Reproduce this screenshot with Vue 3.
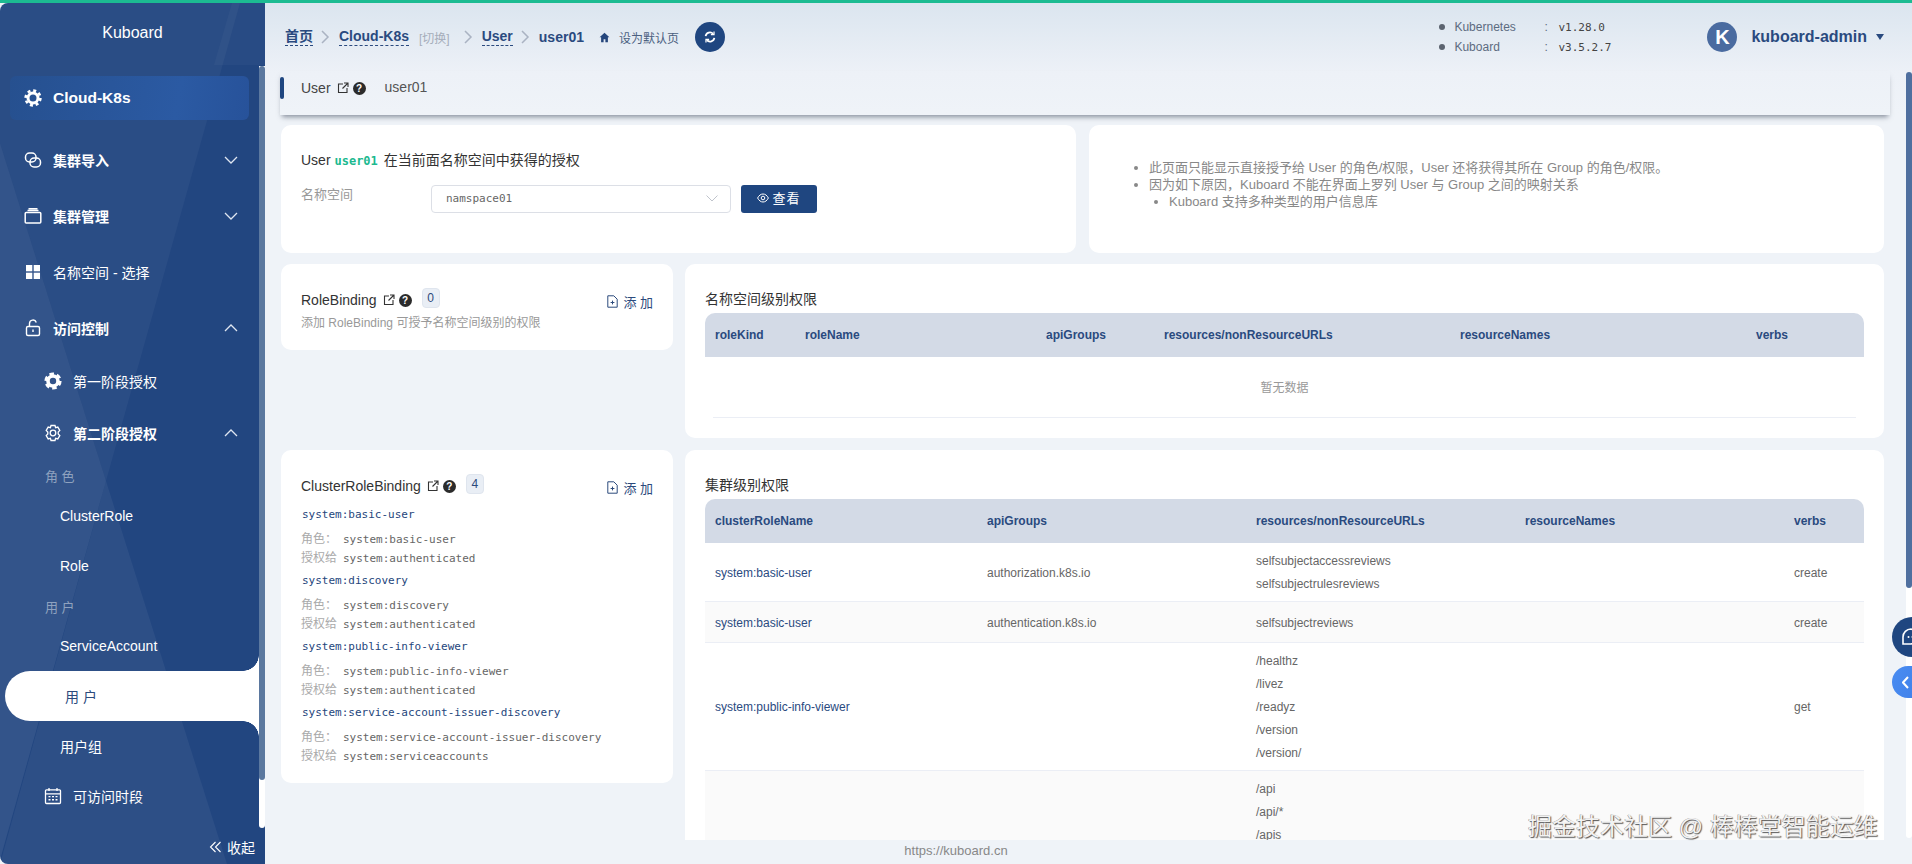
<script setup>
const navItems = [
  { label: '集群导入', icon: 'link', cls: 'lvl1 bold', arrow: 'down' },
  { label: '集群管理', icon: 'box', cls: 'lvl1 bold', arrow: 'down' },
  { label: '名称空间 - 选择', icon: 'grid', cls: 'lvl1' },
  { label: '访问控制', icon: 'lock', cls: 'lvl1 bold', arrow: 'up' },
  { label: '第一阶段授权', icon: 'gear', cls: 'sub tight' },
  { label: '第二阶段授权', icon: 'gearline', cls: 'sub bold', arrow: 'up' },
  { label: '角 色', cls: 'group' },
  { label: 'ClusterRole', cls: 'leaf' },
  { label: 'Role', cls: 'leaf' },
  { label: '用 户', cls: 'group short' },
  { label: 'ServiceAccount', cls: 'leaf' },
  { label: '用 户', cls: 'leaf current' },
  { label: '用户组', cls: 'leaf' },
  { label: '可访问时段', icon: 'cal', cls: 'sub plain' },
]

const bindings = [
  { name: 'system:basic-user', role: 'system:basic-user', to: 'system:authenticated' },
  { name: 'system:discovery', role: 'system:discovery', to: 'system:authenticated' },
  { name: 'system:public-info-viewer', role: 'system:public-info-viewer', to: 'system:authenticated' },
  { name: 'system:service-account-issuer-discovery', role: 'system:service-account-issuer-discovery', to: 'system:serviceaccounts' },
]

const nsColumns = [
  { title: 'roleKind', width: 90 },
  { title: 'roleName', width: 241 },
  { title: 'apiGroups', width: 118 },
  { title: 'resources/nonResourceURLs', width: 296 },
  { title: 'resourceNames', width: 296 },
  { title: 'verbs', width: 118 },
]

const clusterColumns = [
  { title: 'clusterRoleName', width: 272 },
  { title: 'apiGroups', width: 269 },
  { title: 'resources/nonResourceURLs', width: 269 },
  { title: 'resourceNames', width: 269 },
  { title: 'verbs', width: 80 },
]

const clusterRows = [
  { name: 'system:basic-user', group: 'authorization.k8s.io', res: ['selfsubjectaccessreviews', 'selfsubjectrulesreviews'], verb: 'create' },
  { name: 'system:basic-user', group: 'authentication.k8s.io', res: ['selfsubjectreviews'], verb: 'create' },
  { name: 'system:public-info-viewer', group: '', res: ['/healthz', '/livez', '/readyz', '/version', '/version/'], verb: 'get' },
  { name: '', group: '', res: ['/api', '/api/*', '/apis'], verb: '' },
]
</script>

<template>
  <div class="page">
    <div class="topline"></div>
    <div class="shell">
      <aside class="sidebar">
        <svg class="side-bg" width="265" height="861" viewBox="0 0 265 861">
          <polygon points="0,0 240,0 106,478 0,140" fill="#fff" opacity="0.04" />
          <polygon points="0,140 106,478 0,857" fill="#fff" opacity="0.08" />
          <polygon points="106,478 227,861 0,861" fill="#fff" opacity="0.05" />
          <polygon points="232,0 265,0 265,62 214,62" fill="#fff" opacity="0.03" />
        </svg>
        <div class="side-scroll"><div class="side-thumb"></div></div>
        <div class="brand">Kuboard</div>
        <div class="cluster">
          <svg class="nav-icon" width="18" height="18" viewBox="0 0 18 18">
            <circle cx="9" cy="9" r="5" fill="none" stroke="#fff" stroke-width="3" />
            <circle cx="9" cy="9" r="7.4" fill="none" stroke="#fff" stroke-width="2.6" stroke-dasharray="3 2.81" />
          </svg>
          <span>Cloud-K8s</span>
        </div>
        <nav class="nav">
          <div v-for="(item, i) in navItems" :key="i" class="nav-item" :class="item.cls">
            <svg v-if="item.icon === 'link'" class="nav-icon" width="18" height="18" viewBox="0 0 18 18" fill="none" stroke="#fff" stroke-width="1.5">
              <rect x="1.5" y="2" width="10.5" height="9" rx="4" />
              <rect x="6" y="7" width="10.5" height="9" rx="4" />
            </svg>
            <svg v-else-if="item.icon === 'box'" class="nav-icon" width="18" height="18" viewBox="0 0 18 18" fill="none" stroke="#fff" stroke-width="1.5">
              <rect x="1.2" y="5.5" width="15.6" height="10.5" rx="1" />
              <path d="M3.5 3.6h11M4.5 1.8h9" />
            </svg>
            <svg v-else-if="item.icon === 'grid'" class="nav-icon" width="18" height="18" viewBox="0 0 18 18" fill="#fff">
              <rect x="2" y="2" width="6.3" height="6.3" />
              <rect x="9.7" y="2" width="6.3" height="6.3" />
              <rect x="2" y="9.7" width="6.3" height="6.3" />
              <rect x="9.7" y="9.7" width="6.3" height="6.3" />
            </svg>
            <svg v-else-if="item.icon === 'lock'" class="nav-icon" width="18" height="18" viewBox="0 0 18 18" fill="none" stroke="#fff" stroke-width="1.4">
              <rect x="2.5" y="7.5" width="13" height="9" rx="1.5" />
              <path d="M5.5 7.5V4.5a3.5 3.5 0 0 1 6.8-1.1M9 10.5v2.6" />
            </svg>
            <svg v-else-if="item.icon === 'gear'" class="nav-icon" width="18" height="18" viewBox="0 0 18 18">
              <circle cx="9" cy="9" r="5" fill="none" stroke="#fff" stroke-width="3.6" />
              <circle cx="9" cy="9" r="7.2" fill="none" stroke="#fff" stroke-width="2.8" stroke-dasharray="4.5 3.04" />
            </svg>
            <svg v-else-if="item.icon === 'gearline'" class="nav-icon" width="18" height="18" viewBox="0 0 18 18" fill="none" stroke="#fff" stroke-width="1.3">
              <path d="M7 1.5h4l.6 2.2 2.2-.6 2 3.4-1.6 1.6v1.8l1.6 1.6-2 3.4-2.2-.6-.6 2.2H7l-.6-2.2-2.2.6-2-3.4 1.6-1.6V8.1L2.2 6.5l2-3.4 2.2.6z" />
              <circle cx="9" cy="9" r="2.8" />
            </svg>
            <svg v-else-if="item.icon === 'cal'" class="nav-icon" width="18" height="18" viewBox="0 0 18 18" fill="none" stroke="#fff" stroke-width="1.3">
              <rect x="1.5" y="2.8" width="15" height="13.7" rx="1" />
              <path d="M1.5 6.8h15M5 1v3M13 1v3" />
              <path d="M4.5 9.6h2M8 9.6h2M11.5 9.6h2M4.5 12.8h2M8 12.8h2M11.5 12.8h2" stroke-width="1.4" />
            </svg>
            <span class="nav-text">{{ item.label }}</span>
            <svg v-if="item.arrow" class="nav-arrow" width="14" height="8" viewBox="0 0 14 8" fill="none" stroke="#dfe6f1" stroke-width="1.3">
              <path v-if="item.arrow === 'down'" d="M1 1l6 6 6-6" />
              <path v-else d="M1 7l6-6 6 6" />
            </svg>
          </div>
        </nav>
        <div class="collapse">
          <svg width="13" height="12" viewBox="0 0 13 12" fill="none" stroke="#fff" stroke-width="1.1">
            <path d="M6.5 1L1.5 6l5 5M11.5 1l-5 5 5 5" />
          </svg>
          <span>收起</span>
        </div>
      </aside>

      <main class="main">
        <header class="topbar">
          <div class="crumbs">
            <a class="crumb">首页</a>
            <svg class="sep" width="9" height="14" viewBox="0 0 9 14" fill="none" stroke="#aab3c2" stroke-width="1.5"><path d="M1 1l6 6-6 6" /></svg>
            <a class="crumb">Cloud-K8s</a>
            <span class="switch">[切换]</span>
            <svg class="sep wide" width="9" height="14" viewBox="0 0 9 14" fill="none" stroke="#aab3c2" stroke-width="1.5"><path d="M1 1l6 6-6 6" /></svg>
            <a class="crumb">User</a>
            <svg class="sep" width="9" height="14" viewBox="0 0 9 14" fill="none" stroke="#aab3c2" stroke-width="1.5"><path d="M1 1l6 6-6 6" /></svg>
            <span class="crumb-end">user01</span>
            <svg class="home" width="11" height="11" viewBox="0 0 11 11" fill="#25467c"><path d="M5.5.8L.6 5.3h1.5v5h2.5V7.2h1.8v3.1h2.5v-5h1.5z" /></svg>
            <span class="set-default">设为默认页</span>
            <span class="refresh">
              <svg width="14" height="14" viewBox="0 0 16 16" fill="none" stroke="#fff" stroke-width="2">
                <path d="M3 7a5 5 0 0 1 8.6-2.6M13 9a5 5 0 0 1-8.6 2.6" />
                <path d="M12.6 1.6v3.6H9M3.4 14.4v-3.6H7" stroke-width="1.4" />
              </svg>
            </span>
          </div>
          <div class="right-info">
            <div class="versions">
              <div class="ver"><i></i><span class="ver-name">Kubernetes</span><span class="ver-colon">:</span><code>v1.28.0</code></div>
              <div class="ver"><i></i><span class="ver-name">Kuboard</span><span class="ver-colon">:</span><code>v3.5.2.7</code></div>
            </div>
            <span class="avatar">K</span>
            <span class="username">kuboard-admin</span>
            <span class="caret"></span>
          </div>
        </header>

        <div class="subbar">
          <span class="mark"></span>
          <span class="sub-kind">User</span>
          <svg class="ext" width="12" height="12" viewBox="0 0 12 12" fill="none" stroke="#333" stroke-width="1.1"><path d="M6 2H1.5v8.5H10V6M7 1h4v4M11 1L5.5 6.5" /></svg>
          <span class="help">?</span>
          <span class="sub-name">user01</span>
        </div>

        <div class="content">
          <div class="row-top">
            <section class="card query">
              <div class="query-title">User <code>user01</code> 在当前面名称空间中获得的授权</div>
              <div class="form-row">
                <label>名称空间</label>
                <div class="select">
                  <code>namspace01</code>
                  <svg width="12" height="7" viewBox="0 0 12 7" fill="none" stroke="#c0c4cc" stroke-width="1"><path d="M.5.5L6 6 11.5.5" /></svg>
                </div>
                <button class="view-btn">
                  <svg width="12" height="10" viewBox="0 0 12 10" fill="none" stroke="#fff" stroke-width="1"><path d="M.6 5C2 2.4 3.8 1 6 1s4 1.4 5.4 4C10 7.6 8.2 9 6 9S2 7.6.6 5z" /><circle cx="6" cy="5" r="1.8" /></svg>
                  查看
                </button>
              </div>
            </section>
            <section class="card notes">
              <ul>
                <li>此页面只能显示直接授予给 User 的角色/权限，User 还将获得其所在 Group 的角色/权限。</li>
                <li>因为如下原因，Kuboard 不能在界面上罗列 User 与 Group 之间的映射关系
                  <ul><li>Kuboard 支持多种类型的用户信息库</li></ul>
                </li>
              </ul>
            </section>
          </div>

          <div class="row-split first">
            <section class="card side-card short">
              <div class="side-head">
                <span class="side-title">RoleBinding</span>
                <svg class="ext" width="12" height="12" viewBox="0 0 12 12" fill="none" stroke="#333" stroke-width="1.1"><path d="M6 2H1.5v8.5H10V6M7 1h4v4M11 1L5.5 6.5" /></svg>
                <span class="help">?</span>
                <span class="count">0</span>
                <a class="add">
                  <svg width="11" height="13" viewBox="0 0 11 13" fill="none" stroke="#2c4a7c" stroke-width="1"><path d="M.8.8h6l3.4 3.4v8H.8zM3.6 7.5h3.8M5.5 5.6v3.8" /></svg>
                  添 加
                </a>
              </div>
              <p class="side-desc">添加 RoleBinding 可授予名称空间级别的权限</p>
            </section>
            <section class="card table-card ns">
              <h4>名称空间级别权限</h4>
              <table>
                <colgroup><col v-for="c in nsColumns" :key="c.title" :style="{ width: c.width + 'px' }" /></colgroup>
                <thead><tr><th v-for="c in nsColumns" :key="c.title">{{ c.title }}</th></tr></thead>
              </table>
              <div class="empty">暂无数据</div>
            </section>
          </div>

          <div class="row-split">
            <section class="card side-card">
              <div class="side-head">
                <span class="side-title">ClusterRoleBinding</span>
                <svg class="ext" width="12" height="12" viewBox="0 0 12 12" fill="none" stroke="#333" stroke-width="1.1"><path d="M6 2H1.5v8.5H10V6M7 1h4v4M11 1L5.5 6.5" /></svg>
                <span class="help">?</span>
                <span class="count">4</span>
                <a class="add">
                  <svg width="11" height="13" viewBox="0 0 11 13" fill="none" stroke="#2c4a7c" stroke-width="1"><path d="M.8.8h6l3.4 3.4v8H.8zM3.6 7.5h3.8M5.5 5.6v3.8" /></svg>
                  添 加
                </a>
              </div>
              <div v-for="b in bindings" :key="b.name" class="binding">
                <div class="binding-name">{{ b.name }}</div>
                <div class="binding-line"><span>角色：</span><code>{{ b.role }}</code></div>
                <div class="binding-line"><span>授权给</span><code>{{ b.to }}</code></div>
              </div>
            </section>
            <section class="card table-card">
              <h4>集群级别权限</h4>
              <table>
                <colgroup><col v-for="c in clusterColumns" :key="c.title" :style="{ width: c.width + 'px' }" /></colgroup>
                <thead><tr><th v-for="c in clusterColumns" :key="c.title">{{ c.title }}</th></tr></thead>
                <tbody>
                  <tr v-for="(r, i) in clusterRows" :key="i">
                    <td class="name-cell">{{ r.name }}</td>
                    <td>{{ r.group }}</td>
                    <td><div v-for="s in r.res" :key="s">{{ s }}</div></td>
                    <td></td>
                    <td>{{ r.verb }}</td>
                  </tr>
                </tbody>
              </table>
            </section>
          </div>
        </div>

        <footer class="foot">https://kuboard.cn</footer>
      </main>
    </div>

    <div class="main-scroll"><div class="main-thumb"></div></div>
    <div class="chat">
      <svg width="22" height="22" viewBox="0 0 22 22" fill="none" stroke="#fff" stroke-width="1.6">
        <path d="M11 3a8 8 0 0 0-8 8v7h8a8 8 0 0 0 0-15z" />
        <circle cx="8.5" cy="11" r="1" fill="#fff" stroke="none" />
        <circle cx="12.5" cy="11" r="1" fill="#fff" stroke="none" />
      </svg>
    </div>
    <div class="expand">
      <svg width="7" height="13" viewBox="0 0 7 13" fill="none" stroke="#fff" stroke-width="2"><path d="M6 1L1 6.5 6 12" /></svg>
    </div>
    <div class="watermark">掘金技术社区 @ 棒棒堂智能运维</div>
  </div>
</template>

<style>
html, body {
  margin: 0;
  background: #eff3f8;
  overflow: hidden;
}
</style>

<style scoped>
.page {
  position: relative;
  width: 1912px;
  height: 864px;
  overflow: hidden;
  background: #eff3f8;
  font-family: "Liberation Sans", "Noto Sans CJK SC", sans-serif;
  font-size: 12px;
  color: #666;
}

code {
  font-family: "DejaVu Sans Mono", "Noto Sans CJK SC", monospace;
  font-size: 11px;
}

.topline {
  height: 3px;
  background: #1cbb92;
}

.shell {
  display: flex;
  height: 861px;
}

/* sidebar */
.sidebar {
  position: relative;
  flex: 0 0 265px;
  background: #224680;
  border-radius: 8px 0 0 8px;
  overflow: hidden;
  color: #fff;
}

.side-bg {
  position: absolute;
  left: 0;
  top: 0;
}

.side-scroll {
  position: absolute;
  left: 259px;
  top: 63px;
  width: 6px;
  height: 762px;
  background: #fff;
  border-radius: 0 0 3px 3px;
}

.side-thumb {
  height: 714px;
  background: #5b789f;
  border-radius: 3px;
}

.brand {
  position: relative;
  height: 58px;
  line-height: 60px;
  text-align: center;
  font-size: 16px;
}

.cluster {
  position: relative;
  display: flex;
  align-items: center;
  gap: 11px;
  height: 44px;
  margin: 15px 16px 0 10px;
  padding-left: 14px;
  border-radius: 6px;
  background: linear-gradient(100deg, #26508f, #2b5aa3 70%, #27529a);
  font-size: 15.5px;
  font-weight: bold;
}

.nav {
  position: relative;
  width: 259px;
  margin-top: 12px;
}

.nav-item {
  position: relative;
  display: flex;
  align-items: center;
  font-size: 14px;
}

.nav-item.bold .nav-text {
  font-weight: bold;
}

.nav-item.lvl1 {
  height: 56px;
  padding-left: 24px;
}

.nav-item.lvl1 .nav-text {
  margin-left: 11px;
}

.nav-item.sub {
  height: 54px;
  padding-left: 44px;
}

.nav-item.sub.tight {
  height: 50px;
}

.nav-item.sub .nav-text {
  margin-left: 11px;
}

.nav-item.plain {
  height: 50px;
}

.nav-item.group {
  height: 31px;
  padding-left: 45px;
  color: #8fa2bf;
  font-size: 13px;
}

.nav-item.group.short {
  height: 30px;
}

.nav-item.leaf {
  height: 50px;
  padding-left: 60px;
}

.nav-item.current {
  margin-left: 5px;
  padding-left: 60px;
  background: #fff;
  color: #2c4a7c;
  border-radius: 25px 0 0 25px;
}

.nav-item.current::before,
.nav-item.current::after {
  content: "";
  position: absolute;
  right: 0;
  width: 16px;
  height: 16px;
}

.nav-item.current::before {
  top: -16px;
  background: radial-gradient(circle at 0 0, transparent 15.5px, #fff 16px);
}

.nav-item.current::after {
  bottom: -16px;
  background: radial-gradient(circle at 0 100%, transparent 15.5px, #fff 16px);
}

.nav-arrow {
  position: absolute;
  left: 224px;
  top: 50%;
  margin-top: -4px;
}

.nav-icon {
  flex: none;
}

.collapse {
  position: absolute;
  right: 10px;
  bottom: 7px;
  display: flex;
  align-items: center;
  gap: 5px;
  font-size: 14px;
}

/* header */
.main {
  flex: 1;
  min-width: 0;
  display: flex;
  flex-direction: column;
  background: linear-gradient(#dbe5ef 0, #edf1f7 70px, #eff3f8 110px);
}

.topbar {
  display: flex;
  justify-content: space-between;
  align-items: center;
  height: 68px;
  padding-left: 20px;
  flex: none;
}

.crumbs {
  display: flex;
  align-items: center;
}

.crumb {
  font-size: 14px;
  font-weight: bold;
  color: #2a4a7f;
  border-bottom: 1px dashed #2a4a7f;
  line-height: 17px;
}

.crumb-end {
  font-size: 14px;
  font-weight: bold;
  color: #2a4a7f;
}

.sep {
  margin: 0 9px 0 8px;
}

.sep.wide {
  margin-left: 14px;
}

.switch {
  margin-left: 10px;
  color: #a5adba;
  font-size: 12px;
}

.home {
  margin-left: 15px;
}

.set-default {
  margin-left: 9px;
  color: #4b5f80;
  font-size: 12px;
}

.refresh {
  display: flex;
  align-items: center;
  justify-content: center;
  width: 30px;
  height: 30px;
  margin-left: 16px;
  border-radius: 50%;
  background: #1f4680;
}

.right-info {
  display: flex;
  align-items: center;
  padding-right: 28px;
}

.versions {
  margin-right: 90px;
  width: 178px;
}

.ver {
  display: flex;
  align-items: center;
  height: 20px;
  color: #5c6b80;
  font-size: 12px;
}

.ver i {
  width: 6px;
  height: 6px;
  margin-right: 9px;
  border-radius: 50%;
  background: #5c6470;
}

.ver-name {
  width: 90px;
}

.ver-colon {
  width: 14px;
}

.ver code {
  color: #444;
  font-size: 11px;
}

.avatar {
  width: 30px;
  height: 30px;
  line-height: 30px;
  border-radius: 50%;
  background: #4a6ba0;
  color: #fff;
  text-align: center;
  font-size: 20px;
  font-weight: bold;
}

.username {
  margin-left: 14px;
  color: #2a4a7f;
  font-size: 16px;
  font-weight: bold;
}

.caret {
  margin-left: 9px;
  border: 4px solid transparent;
  border-top: 6px solid #2a4a7f;
  border-bottom: 0;
}

.subbar {
  position: relative;
  z-index: 1;
  flex: none;
  display: flex;
  align-items: center;
  height: 44px;
  margin: 0 22px 0 15px;
  padding-bottom: 10px;
  box-sizing: border-box;
  box-shadow: 0 4px 5px -2px rgba(50, 60, 80, 0.55);
}

.mark {
  width: 4px;
  height: 22px;
  border-radius: 2px;
  background: #1f4680;
}

.sub-kind {
  margin-left: 17px;
  color: #444;
  font-size: 14px;
}

.sub-name {
  margin-left: 19px;
  margin-top: -2px;
  color: #555;
  font-size: 14px;
}

.ext {
  margin-left: 6px;
  flex: none;
}

.help {
  width: 13px;
  height: 13px;
  margin-left: 4px;
  border-radius: 50%;
  background: #2b2b2b;
  color: #fff;
  font-size: 10px;
  font-weight: bold;
  line-height: 13px;
  text-align: center;
  flex: none;
}

/* content */
.content {
  flex: 1;
  min-height: 0;
  overflow: hidden;
  padding: 10px 28px 0 16px;
}

.card {
  background: #fff;
  border-radius: 10px;
  box-sizing: border-box;
}

.row-top {
  display: grid;
  grid-template-columns: 1fr 1fr;
  gap: 13px;
}

.query,
.notes {
  height: 128px;
}

.query {
  padding: 26px 20px 0;
  font-size: 14px;
  color: #333;
}

.query-title {
  line-height: 18px;
}

.query-title code {
  margin-right: 2px;
  color: #1cb98f;
  font-size: 12px;
  font-weight: bold;
}

.form-row {
  display: flex;
  align-items: flex-start;
  margin-top: 15px;
}

.form-row label {
  width: 130px;
  line-height: 20px;
  color: #999;
  font-size: 13px;
}

.select {
  display: flex;
  align-items: center;
  justify-content: space-between;
  box-sizing: border-box;
  width: 300px;
  height: 28px;
  padding: 0 12px 2px 14px;
  border: 1px solid #dcdfe6;
  border-radius: 4px;
  color: #666;
}

.view-btn {
  display: flex;
  align-items: center;
  justify-content: center;
  gap: 3px;
  width: 76px;
  height: 28px;
  margin-left: 10px;
  padding: 0 0 3px;
  border: 0;
  border-radius: 3px;
  background: #1f4680;
  color: #fff;
  font-family: inherit;
  font-size: 13px;
  letter-spacing: 1px;
}

.notes {
  padding-top: 34px;
  color: #888;
  font-size: 13px;
  line-height: 17px;
}

.notes ul {
  margin: 0;
  padding-left: 60px;
  list-style: disc;
}

.notes ul ul {
  padding-left: 20px;
  list-style: disc;
}

.row-split {
  display: grid;
  grid-template-columns: 392px 1fr;
  gap: 12px;
  align-items: start;
  margin-top: 12px;
}

.row-split.first {
  margin-top: 11px;
}

.side-card {
  padding: 26px 20px 0;
  height: 333px;
}

.side-card.short {
  height: 86px;
}

.side-head {
  position: relative;
  display: flex;
  align-items: center;
  height: 20px;
}

.side-title {
  color: #333;
  font-size: 14px;
}

.count {
  width: 18px;
  height: 20px;
  margin: -4px 0 0 10px;
  border: 1px solid #dfe5ee;
  border-radius: 4px;
  box-sizing: border-box;
  background: #e9eef5;
  color: #2c4a7c;
  line-height: 18px;
  text-align: center;
}

.add {
  position: absolute;
  right: 0;
  top: 2px;
  display: flex;
  align-items: center;
  gap: 5px;
  color: #2c4a7c;
  font-size: 13px;
}

.side-desc {
  margin: 5px 0 0;
  color: #999;
  font-size: 12px;
  line-height: 16px;
}

.binding {
  padding-left: 1px;
  height: 66px;
}

.side-head + .binding {
  margin-top: 8px;
}

.binding-name {
  height: 26px;
  line-height: 22px;
  font-family: "DejaVu Sans Mono", monospace;
  font-size: 11px;
  color: #25467c;
}

.binding-line {
  display: flex;
  margin-left: -1px;
  height: 19px;
  line-height: 19px;
}

.binding-line span {
  width: 42px;
  color: #aaa;
}

.binding-line code {
  color: #666;
}

.table-card {
  height: 400px;
  padding: 26px 20px 0;
}

.table-card.ns {
  height: 174px;
}

h4 {
  margin: 0 0 5px;
  color: #333;
  font-size: 14px;
  font-weight: normal;
  line-height: 18px;
}

table {
  width: 100%;
  table-layout: fixed;
  border-collapse: separate;
  border-spacing: 0;
}

th {
  height: 44px;
  padding: 0 10px;
  background: #d3dae6;
  color: #2a4a7f;
  font-size: 12px;
  text-align: left;
}

th:first-child {
  border-radius: 10px 0 0 0;
}

th:last-child {
  border-radius: 0 10px 0 0;
}

td {
  padding: 7px 10px 5px;
  border-bottom: 1px solid #ebeef5;
  line-height: 23px;
  color: #666;
}

tbody tr:nth-child(2) td {
  padding-top: 9.5px;
  padding-bottom: 7.5px;
}

tbody tr:nth-child(even) td {
  background: #fafafa;
}

.name-cell {
  color: #2a4a7f;
}

.empty {
  height: 60px;
  margin: 0 8px;
  border-bottom: 1px solid #ebeef5;
  color: #999;
  line-height: 62px;
  text-align: center;
}

.foot {
  flex: none;
  height: 24px;
  padding-right: 265px;
  color: #888;
  font-size: 13px;
  line-height: 22px;
  text-align: center;
  background: #eff3f8;
}

/* overlays */
.main-scroll {
  position: absolute;
  right: 0;
  top: 72px;
  width: 6px;
  height: 766px;
  background: #fff;
  border-radius: 3px;
}

.main-thumb {
  height: 516px;
  background: #4f6f9f;
  border-radius: 3px;
}

.chat {
  position: absolute;
  left: 1892px;
  top: 617px;
  display: flex;
  align-items: center;
  width: 40px;
  height: 40px;
  padding-left: 8px;
  box-sizing: border-box;
  border-radius: 50%;
  background: #1f4680;
}

.expand {
  position: absolute;
  left: 1892px;
  top: 666px;
  display: flex;
  align-items: center;
  width: 32px;
  height: 32px;
  padding-left: 10px;
  box-sizing: border-box;
  border-radius: 16px 0 0 16px;
  background: linear-gradient(120deg, #4a8df2, #3f7fe8);
}

.watermark {
  position: absolute;
  left: 1528px;
  top: 812px;
  color: #f2f2f2;
  font-size: 24px;
  line-height: 30px;
  white-space: nowrap;
  text-shadow: 1px 1px 1px #555, -0.5px -0.5px 0.5px #888;
}
</style>
